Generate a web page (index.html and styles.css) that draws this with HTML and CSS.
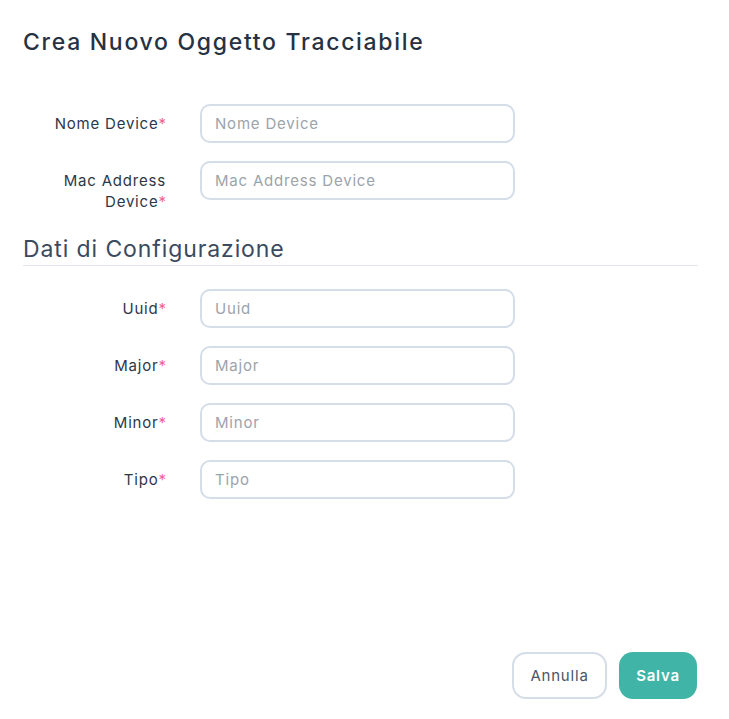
FILE: index.html
```html
<!DOCTYPE html>
<html lang="it">
<head>
<meta charset="utf-8">
<title>Crea Nuovo Oggetto Tracciabile</title>
<link rel="stylesheet" href="styles.css">
</head>
<body>
<div class="modal">
  <h1 class="title">Crea Nuovo Oggetto Tracciabile</h1>
  <div class="rows first">
    <div class="row">
      <label class="label">Nome Device<span class="req">*</span></label>
      <input class="input" placeholder="Nome Device">
    </div>
    <div class="row">
      <label class="label">Mac Address Device<span class="req">*</span></label>
      <input class="input" placeholder="Mac Address Device">
    </div>
  </div>
  <h2 class="section">Dati di Configurazione</h2>
  <div class="rows">
    <div class="row">
      <label class="label">Uuid<span class="req">*</span></label>
      <input class="input" placeholder="Uuid">
    </div>
    <div class="row">
      <label class="label">Major<span class="req">*</span></label>
      <input class="input" placeholder="Major">
    </div>
    <div class="row">
      <label class="label">Minor<span class="req">*</span></label>
      <input class="input" placeholder="Minor">
    </div>
    <div class="row">
      <label class="label">Tipo<span class="req">*</span></label>
      <input class="input" placeholder="Tipo">
    </div>
  </div>
  <div class="footer">
    <button class="btn btn-cancel">Annulla</button>
    <button class="btn btn-save">Salva</button>
  </div>
</div>
</body>
</html>
```
FILE: styles.css
```css
* { box-sizing: border-box; }
html, body { margin: 0; padding: 0; background: #fff; }
body { font-family: "Inter", "Open Sans", sans-serif; color: #2d3748; }
.modal {
  height: 719px;
  display: flex;
  flex-direction: column;
  padding: 0 31px 20px 23px;
}
.title {
  margin: 27px 0 0;
  font-size: 23px;
  line-height: 30px;
  font-weight: 500;
  color: #263243;
  letter-spacing: 1.7px;
}
.rows { display: flex; flex-direction: column; gap: 18px; margin-top: 23px; }
.rows.first { margin-top: 47px; }
.row { display: flex; align-items: flex-start; gap: 34px; }
.label {
  width: 143px;
  padding-top: 9px;
  text-align: right;
  font-size: 15px;
  line-height: 21px;
  letter-spacing: 0.8px;
  color: #2d3748;
}
.req { color: #f06292; letter-spacing: 0; }
.input {
  width: 315px;
  height: 39px;
  border: 2px solid #d5dde8;
  border-radius: 10px;
  padding: 0 13px;
  font-family: inherit;
  font-size: 15px;
  letter-spacing: 0.8px;
  color: #2d3748;
  outline: none;
}
.input::placeholder { color: #9ca3ab; }
.section {
  margin: 22px 0 0;
  font-size: 23px;
  line-height: 30px;
  font-weight: 400;
  color: #3b4a5e;
  letter-spacing: 0.9px;
  padding-bottom: 1px;
  border-bottom: 1px solid #e2e6ea;
}
.footer {
  margin-top: auto;
  display: flex;
  justify-content: flex-end;
  gap: 12px;
  padding-right: 1px;
}
.btn {
  height: 47px;
  border-radius: 14px;
  font-family: inherit;
  font-size: 15px;
  letter-spacing: 0.8px;
  cursor: pointer;
}
.btn-cancel {
  width: 95px;
  background: #fff;
  border: 2px solid #d5dde8;
  color: #4a5568;
}
.btn-save {
  width: 78px;
  background: #40b4a6;
  border: none;
  color: #fff;
  font-weight: 600;
}
```
